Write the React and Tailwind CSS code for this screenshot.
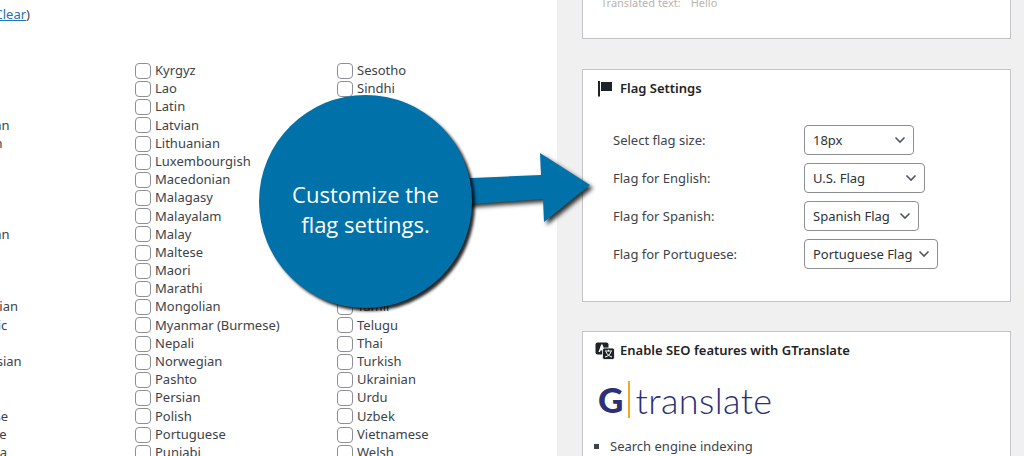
import React from "react";

const FONT = "font-['Noto_Sans','Open_Sans',sans-serif]";

// first column runs off the left edge of the crop, same as the screenshot
const col1 = ["Finnish", "French", "Gaelic", "Georgian", "German", "Greek", "Hausa", "Haitian", "Hausa", "Hawaiian", "Hindi", "Hmong", "Irish", "Hungarian", "Icelandic", "Igbo", "Indonesian", "Irish", "Italian", "Japanese", "Javanese", "Kannada"];
const col2 = ["Kyrgyz", "Lao", "Latin", "Latvian", "Lithuanian", "Luxembourgish", "Macedonian", "Malagasy", "Malayalam", "Malay", "Maltese", "Maori", "Marathi", "Mongolian", "Myanmar (Burmese)", "Nepali", "Norwegian", "Pashto", "Persian", "Polish", "Portuguese", "Punjabi"];
const col3 = ["Sesotho", "Sindhi", "Sinhala", "Slovak", "Slovenian", "Somali", "Spanish", "Sudanese", "Swahili", "Swedish", "Tagalog", "Tajik", "Tatar", "Tamil", "Telugu", "Thai", "Turkish", "Ukrainian", "Urdu", "Uzbek", "Vietnamese", "Welsh"];

const flagRows = [
    { label: "Select flag size:", value: "18px", width: "w-[110px]" },
    { label: "Flag for English:", value: "U.S. Flag", width: "w-[121px]" },
    { label: "Flag for Spanish:", value: "Spanish Flag", width: "w-[115px]" },
    { label: "Flag for Portuguese:", value: "Portuguese Flag", width: "w-[134px]" },
];

const LanguageColumn = ({ items }) => (
    <div className="w-[202px] shrink-0">
        {items.map((name, i) => (
            <label key={name + i} className="flex items-center h-[18.19px] whitespace-nowrap text-[13px] text-[#3c434a]">
                <span className="w-4 h-4 shrink-0 mr-1 rounded border border-[#8c8f94] bg-white" />
                {name}
            </label>
        ))}
    </div>
);

const FlagSelect = ({ value, width }) => (
    <div className={`relative h-[30px] ${width}`}>
        <select
            defaultValue={value}
            className={`appearance-none w-full h-full pl-2 pt-px rounded border border-[#8c8f94] bg-white text-[13px] text-[#2c3338] ${FONT}`}
        >
            <option>{value}</option>
        </select>
        <svg viewBox="0 0 12 8" className="absolute right-[8px] top-[11px] w-3 h-2 pointer-events-none" fill="none" stroke="#50575e" strokeWidth="1.6">
            <path d="M1.5 1.5 6 6l4.500-4.500" />
        </svg>
    </div>
);

const FlagIcon = () => (
    <svg viewBox="0 0 15 16" className="w-[15px] h-4 shrink-0" fill="#1d2327">
        <rect x="0" y="0" width="2" height="15.5" />
        <rect x="3" y="1" width="11" height="9" />
    </svg>
);

const TranslationIcon = () => (
    <svg viewBox="0 0 20 18" className="w-5 h-[18px] shrink-0">
        <rect x="0.5" y="0.5" width="13" height="12" rx="2" fill="#1d2327" />
        <path d="M3.500 10 6.200 2.500h1.300L10.200 10H8.700L8.200 8.500H5.500L5 10z" fill="#fff" />
        <rect x="7.500" y="6" width="12" height="11.500" rx="2" fill="#1d2327" stroke="#fff" strokeWidth="0.8" />
        <path d="M10 9h7M13.500 7.800v1.500M11 9.500c1 3.200 3.500 4.800 6 5.500M16 9.500c-1 3.200-3 4.800-6 5.500" stroke="#fff" strokeWidth="1" fill="none" />
    </svg>
);

const Callout = () => (
    <>
        <svg viewBox="0 0 140 90" className="absolute left-[460px] top-[146px] w-[140px] h-[90px] drop-shadow-[3px_3px_2px_rgba(0,0,0,0.8)]" fill="#0071a9">
            <path d="M0 32.500 81 29 80 7l50 32-46 37-1-23-83 6z" />
        </svg>
        <div className="absolute left-[259px] top-[95px] w-[213px] h-[213px] rounded-full bg-[#0071a9] shadow-[3px_3px_3px_rgba(0,0,0,0.85)] flex items-center justify-center text-center text-white text-[22px] leading-[30px] font-['Open_Sans',sans-serif]">
            <div className="mt-[15px]">Customize the<br />flag settings.</div>
        </div>
    </>
);

export default function App() {
    return (
        <div className={`relative w-[1024px] h-[456px] overflow-hidden flex ${FONT}`}>
            {/* Language list */}
            <div className="w-[557px] shrink-0 bg-white">
                <div className="w-[30px] h-[61.7px] pt-[5px] flex justify-end whitespace-nowrap text-[13px] leading-[18px] text-[#3c434a]">
                    <span>
                        (<a className="text-[#2271b1] underline">Select All</a> | <a className="text-[#2271b1] underline">Clear</a>)
                    </span>
                </div>
                <div className="flex -ml-[67px]">
                    <LanguageColumn items={col1} />
                    <LanguageColumn items={col2} />
                    <LanguageColumn items={col3} />
                </div>
            </div>

            {/* Sidebar */}
            <div className="flex-1 bg-[#f0f0f1] pl-[25px] pr-[13px]">
                <div className="h-[40px] -mt-px border border-[#c3c4c7] bg-white pl-[18px] flex gap-[10px] text-[11px] leading-[5px] text-[#b9b4ae] whitespace-nowrap">
                    <span>Translated text:</span>
                    <span>Hello</span>
                </div>

                <div className="mt-[30px] h-[233px] border border-[#c3c4c7] bg-white">
                    <div className="flex items-center gap-[7px] pl-[15px] pt-px h-[36px] text-[13px] font-semibold text-[#1d2327]">
                        <FlagIcon />
                        Flag Settings
                    </div>
                    <div className="mt-[19px] pl-[30px] flex flex-col gap-2">
                        {flagRows.map((row) => (
                            <div key={row.label} className="flex items-center">
                                <span className="w-[191px] pt-[1px] text-[13px] text-[#3c434a]">{row.label}</span>
                                <FlagSelect value={row.value} width={row.width} />
                            </div>
                        ))}
                    </div>
                </div>

                <div className="mt-[29px] h-[140px] border border-[#c3c4c7] bg-white">
                    <div className="flex items-center gap-[5px] pl-3 pt-px h-[36px] text-[13px] font-semibold text-[#1d2327]">
                        <TranslationIcon />
                        Enable SEO features with GTranslate
                    </div>
                    <div className="flex items-center mt-[13px] ml-[15px] h-[37px] text-[#2b2f77] font-['Lato',sans-serif]">
                        <span className="text-[35px] leading-none font-black w-[30px]">G</span>
                        <span className="w-[1.5px] h-[37px] bg-[#f5a623] mr-[6px]" />
                        <span className="text-[36px] leading-none font-light tracking-[0.4px]">translate</span>
                    </div>
                    <ul className="mt-[19px] ml-[11px] list-none">
                        <li className="flex items-center text-[13px] text-[#3c434a]">
                            <span className="w-[5px] h-[5px] bg-[#3c434a] mr-[11px]" />
                            Search engine indexing
                        </li>
                    </ul>
                </div>
            </div>

            <Callout />
        </div>
    );
}
